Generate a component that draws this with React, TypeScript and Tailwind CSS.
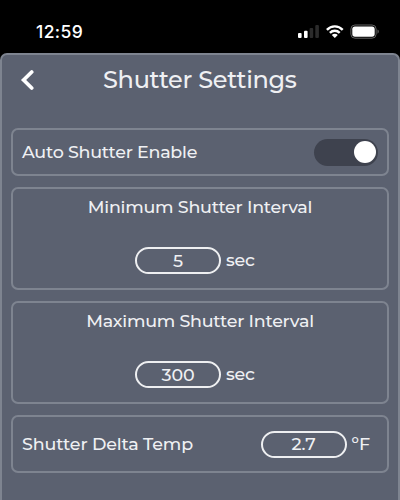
import type { ReactNode } from "react";

function StatusBar() {
  return (
    <header className="flex h-[53px] shrink-0 items-start justify-between pl-[36px] pr-[20px] pt-[22px] text-white">
      <span className="font-['Inter',sans-serif] text-[17.5px] font-medium leading-[20px] tracking-[0.4px]">12:59</span>
      <div className="flex pt-[2px]">
        <svg width="22" height="16" viewBox="0 0 22 16">
          <rect x="0" y="9" width="3.6" height="5" rx="1" fill="#fff" />
          <rect x="6" y="6.8" width="3.6" height="7.2" rx="1" fill="#fff" />
          <rect x="11.6" y="4" width="3.6" height="10" rx="1" fill="#2b2b2b" />
          <rect x="17.3" y="1" width="3.6" height="13" rx="1" fill="#2b2b2b" />
        </svg>
        <svg width="20" height="16" viewBox="0 0 20 16" className="ml-[5px]" fill="none" stroke="#fff" strokeWidth="2.4">
          <path d="M1.9 5.8C6.3 1.2 13.3 1.2 17.7 5.8" />
          <path d="M4.9 8.9C7.7 6.1 11.9 6.1 14.7 8.9" />
          <path d="M9.8 14L6.8 10.9C8.4 9.4 11.2 9.4 12.8 10.9Z" fill="#fff" stroke="none" />
        </svg>
        <svg width="30" height="16" viewBox="0 0 30 16" className="ml-[5px]">
          <rect x="0.9" y="1" width="25.2" height="13.2" rx="4" fill="none" stroke="#626262" strokeWidth="1" />
          <rect x="2.3" y="2.5" width="22.4" height="10.3" rx="2.7" fill="#fff" />
          <path d="M27.5 5.5C29.3 6.2 29.3 9 27.5 9.7Z" fill="#626262" />
        </svg>
      </div>
    </header>
  );
}

function Card({ className, children }: { className: string; children: ReactNode }) {
  return <section className={`rounded-[7px] border-2 border-[#7e8490] ${className}`}>{children}</section>;
}

function ValuePill({ children }: { children: ReactNode }) {
  return (
    <div className="flex h-[27px] w-[86px] items-center justify-center rounded-full border-2 border-[#eeeff1] text-[17.5px] leading-none tracking-[-0.1px]">
      {children}
    </div>
  );
}

function IntervalCard({ title, value }: { title: string; value: string }) {
  return (
    <Card className="flex h-[103px] flex-col items-center">
      <h2 className="mt-[7px] whitespace-nowrap text-[17.5px] font-medium leading-[22px] tracking-[-0.25px]">{title}</h2>
      <div className="mt-[29px] flex w-full items-center pl-[122px]">
        <ValuePill>{value}</ValuePill>
        <span className="mb-px ml-[5px] text-[17.5px] leading-[22px] tracking-[-0.2px]">sec</span>
      </div>
    </Card>
  );
}

export default function App() {
  return (
    <div className="flex h-[500px] w-[400px] flex-col overflow-hidden bg-black font-['Montserrat','Inter',sans-serif] font-medium text-[#eff0f3]">
      <StatusBar />
      <main className="flex flex-1 flex-col rounded-t-[7px] border-x-2 border-t-2 border-[#7e8490] bg-[#5b6170]">
        <div className="flex h-[73px] items-start pl-[18px]">
          <svg width="14" height="22" viewBox="0 0 14 22" className="mt-[14px] shrink-0" fill="none" stroke="#fff" strokeWidth="3.7" strokeLinecap="round">
            <path d="M11.7 3L3.6 11L11.7 19" />
          </svg>
          <h1 className="ml-[69px] mt-[10px] whitespace-nowrap text-[24px] font-medium leading-[30px] tracking-[-0.3px]">Shutter Settings</h1>
        </div>
        <div className="flex flex-col gap-[11px] px-[9px]">
          <Card className="flex h-[48px] items-center justify-between pl-[9px] pr-[9px]">
            <span className="mt-px whitespace-nowrap text-[17.5px] tracking-[-0.26px]">Auto Shutter Enable</span>
            <div className="flex h-[27px] w-[64px] items-center justify-end rounded-full bg-[#3e424e] pr-[2px]">
              <div className="size-[22px] rounded-full bg-white" />
            </div>
          </Card>
          <IntervalCard title="Minimum Shutter Interval" value="5" />
          <IntervalCard title="Maximum Shutter Interval" value="300" />
          <Card className="flex h-[58px] items-center pl-[9px] pr-[17px]">
            <span className="mt-px whitespace-nowrap text-[17.5px] tracking-[-0.15px]">Shutter Delta Temp</span>
            <div className="ml-auto flex items-center">
              <ValuePill>2.7</ValuePill>
              <span className="ml-[5px] text-[17.5px]">ºF</span>
            </div>
          </Card>
        </div>
      </main>
    </div>
  );
}
